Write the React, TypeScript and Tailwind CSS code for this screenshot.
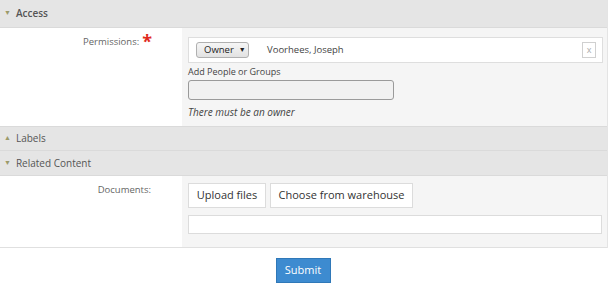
export default function App() {
  return (
    <div className="w-[610px] h-[287px] bg-white text-[10px] text-[#333]" style={{ fontFamily: '"Open Sans", "Noto Sans", sans-serif' }}>
      <div className="w-[608px] border-r border-[#e4e4e4]">
        <div className="h-[28px] bg-[#e5e5e5] border-b border-[#dadada] flex items-center pl-[4px] gap-[5px] text-[#555] font-semibold text-[10px]">
          <span className="text-[7px] text-[#9c9a6a]">▼</span>
          <span>Access</span>
        </div>
        <div className="flex h-[98px]">
          <div className="w-[182px] flex justify-end pr-[30px] pt-[7px] text-[#666] text-[9.5px]">
            <span>Permissions:</span>
            <span className="text-[#e02a1d] text-[18px] leading-[12px] ml-[3px] font-bold">*</span>
          </div>
          <div className="flex-1 bg-[#f5f5f5] pl-[6px] pr-[4px] pt-[9px]">
            <div className="h-[26px] bg-white border border-[#dedede] flex items-center pl-[7px] pr-[6px]">
              <div className="h-[16px] w-[53px] pl-[7px] bg-gradient-to-b from-[#f6f6f6] to-[#e2e2e2] border border-[#b0b0b0] rounded-[3px] flex items-center gap-[5px] text-[#222] text-[9.5px]">
                <span>Owner</span>
                <span className="text-[7px]">▼</span>
              </div>
              <span className="ml-[18px] text-[#444] text-[9.5px]">Voorhees, Joseph</span>
              <span className="ml-auto w-[14px] h-[16px] border border-[#d0d0d0] flex items-center justify-center text-[#aaa] text-[9px]">x</span>
            </div>
            <div className="mt-[3px] text-[#444] leading-[12px] text-[9px]">Add People or Groups</div>
            <div className="mt-[2px] w-[206px] h-[20px] bg-[#f1f1f1] border border-[#9a9a9a] rounded-[3px]" />
            <div className="mt-[6px] italic text-[#444] leading-[12px]">There must be an owner</div>
          </div>
        </div>
        <div className="h-[25px] bg-[#e5e5e5] border-y border-[#dadada] flex items-center pl-[4px] gap-[5px] text-[#555]">
          <span className="text-[7px] text-[#9c9a6a]">▲</span>
          <span>Labels</span>
        </div>
        <div className="h-[25px] bg-[#e5e5e5] border-b border-[#dadada] flex items-center pl-[4px] gap-[5px] text-[#555]">
          <span className="text-[7px] text-[#9c9a6a]">▼</span>
          <span>Related Content</span>
        </div>
        <div className="flex h-[72px] border-b border-[#e0e0e0]">
          <div className="w-[182px] flex justify-end pr-[31px] pt-[7px] text-[#666] text-[9.5px]">
            <span>Documents:</span>
          </div>
          <div className="flex-1 bg-[#f5f5f5] pl-[6px] pr-[5px] pt-[7px]">
            <div className="flex gap-[4px]">
              <div className="h-[25px] w-[78px] justify-center bg-white border border-[#dcdcdc] flex items-center text-[11px] text-[#333]">Upload files</div>
              <div className="h-[25px] w-[143px] justify-center bg-white border border-[#dcdcdc] flex items-center text-[11px] text-[#333]">Choose from warehouse</div>
            </div>
            <div className="mt-[7px] h-[19px] bg-white border border-[#dcdcdc]" />
          </div>
        </div>
      </div>
      <div className="flex justify-center pt-[10px] pr-[4px]">
        <button className="h-[25px] w-[55px] bg-[#3d8bd0] border border-[#2f78b8] text-white text-[11px]">Submit</button>
      </div>
    </div>
  );
}
